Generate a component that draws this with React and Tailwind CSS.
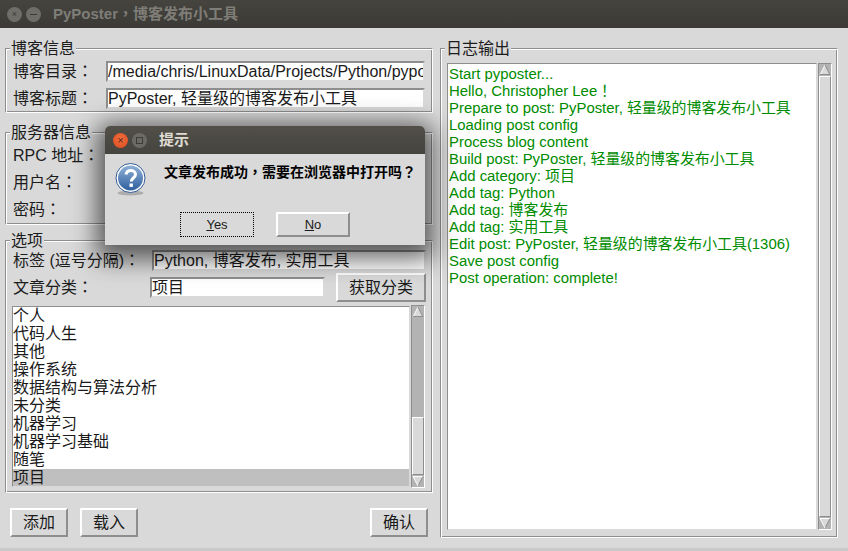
import React from "react";

const font = { fontFamily: '"Liberation Sans","Noto Sans CJK SC",sans-serif' };
const tcFont = { fontFamily: '"Noto Sans CJK TC",sans-serif' };

function T({ children }) {
  return String(children)
    .split(/([：，！？])/)
    .map((part, i) =>
      i % 2 ? (
        <span key={i} className="leading-[0]" style={tcFont}>{part}</span>
      ) : (
        part
      )
    );
}

function Frame({ title, className = "", children }) {
  return (
    <fieldset className={"min-w-0 border border-t-[#8e8e8e] border-l-[#8e8e8e] border-r-white border-b-white shadow-[inset_1px_1px_0_#fff,inset_-1px_-1px_0_#8e8e8e] " + className}>
      <legend className="ml-[4px] bg-[#d9d9d9] px-[1px] text-[16px] leading-[17px] text-[#1c1c1c]">{title}</legend>
      {children}
    </fieldset>
  );
}

function Entry({ value, className = "" }) {
  return (
    <div className={"h-[21px] overflow-hidden whitespace-nowrap border-2 border-t-[#8e8e8e] border-l-[#8e8e8e] border-r-[#d9d9d9] border-b-[#d9d9d9] bg-white text-[16px] leading-[17px] text-[#1a1a1a] " + className}>
      {value}
    </div>
  );
}

function Btn({ children, className = "" }) {
  return (
    <div className={"flex items-center justify-center border-2 border-t-white border-l-white border-r-[#8e8e8e] border-b-[#8e8e8e] bg-[#d9d9d9] text-[16px] text-[#1a1a1a] " + className}>
      {children}
    </div>
  );
}

function Arrow({ down }) {
  return (
    <svg width="12" height="12" viewBox="0 0 12 12" className="block shrink-0">
      <rect width="12" height="12" fill="#b3b3b3" />
      {down ? (
        <>
          <polygon points="1,1 11,1 6,11" fill="#d9d9d9" />
          <path d="M1 1.5H11" stroke="#fff" />
          <path d="M11 1.5L6 11" stroke="#8e8e8e" />
          <path d="M1 1.5L6 11" stroke="#fff" />
        </>
      ) : (
        <>
          <polygon points="6,1 11,11 1,11" fill="#d9d9d9" />
          <path d="M6 1L1 11" stroke="#fff" />
          <path d="M1 10.5H11" stroke="#8e8e8e" />
          <path d="M6 1L11 11" stroke="#8e8e8e" />
        </>
      )}
    </svg>
  );
}

function Scrollbar({ topGap, thumbH, className = "" }) {
  return (
    <div className={"flex w-[14px] shrink-0 flex-col border border-t-[#8e8e8e] border-l-[#8e8e8e] border-r-white border-b-white bg-[#b3b3b3] " + className}>
      <Arrow />
      <div className="min-h-0 flex-1">
        <div style={{ height: topGap }} />
        <div className="border border-t-white border-l-white border-r-[#8e8e8e] border-b-[#8e8e8e] bg-[#d9d9d9]" style={{ height: thumbH }} />
      </div>
      <Arrow down />
    </div>
  );
}

const cats = ["个人", "代码人生", "其他", "操作系统", "数据结构与算法分析", "未分类", "机器学习", "机器学习基础", "随笔"];

const logs = [
  "Start pyposter...",
  "Hello, Christopher Lee！",
  "Prepare to post: PyPoster, 轻量级的博客发布小工具",
  "Loading post config",
  "Process blog content",
  "Build post: PyPoster, 轻量级的博客发布小工具",
  "Add category: 项目",
  "Add tag: Python",
  "Add tag: 博客发布",
  "Add tag: 实用工具",
  "Edit post: PyPoster, 轻量级的博客发布小工具(1306)",
  "Save post config",
  "Post operation: complete!",
];

function WinBtn({ red, children }) {
  return (
    <div className={"flex size-[15px] items-center justify-center rounded-full " + (red ? "bg-[radial-gradient(circle_at_50%_40%,#f0703f,#d9481c)]" : "bg-[#6b6a65]")}>
      {children}
    </div>
  );
}

function Question() {
  return (
    <svg width="32" height="34" viewBox="0 0 32 34" className="block">
      <defs>
        <linearGradient id="qg" x1="0" y1="0" x2="0" y2="1">
          <stop offset="0" stopColor="#8fb0d6" />
          <stop offset="1" stopColor="#2f5f9e" />
        </linearGradient>
      </defs>
      <ellipse cx="15.5" cy="30" rx="13" ry="2.5" fill="#000" opacity="0.2" />
      <circle cx="15.5" cy="15" r="14.5" fill="#fff" stroke="#2f5a96" strokeWidth="1" />
      <circle cx="15.5" cy="15" r="12.5" fill="url(#qg)" />
      <path d="M11 11.5C11.5 8.5 14 7.5 16 7.5C19 7.5 20.5 9.5 20.5 11.5C20.5 15 16.2 15 16.2 18.5" fill="none" stroke="#fff" strokeWidth="3" />
      <rect x="14.5" y="20.5" width="3.4" height="3.4" fill="#fff" />
    </svg>
  );
}

function Row({ label, value }) {
  return (
    <div className="flex h-[21px] items-center pl-[7px] pr-[7px]">
      <span className="w-[93px] shrink-0 whitespace-nowrap text-[16px] leading-[21px] text-[#1c1c1c]"><T>{label}</T></span>
      <Entry value={value} className="flex-1" />
    </div>
  );
}

export default function App() {
  return (
    <div style={font} className="relative flex h-[551px] w-[848px] flex-col overflow-hidden bg-[#d9d9d9]">
      <div className="flex h-[28px] shrink-0 items-center bg-[linear-gradient(#45443f,#3b3a36)] pl-[7px]">
        <div className="flex gap-[4px]">
          <div className="flex size-[15px] items-center justify-center rounded-full bg-[#6e6d68] text-[9px] leading-none text-[#3c3b37]">×</div>
          <div className="flex size-[15px] items-center justify-center rounded-full bg-[#6e6d68]">
            <div className="h-[1px] w-[7px] bg-[#3c3b37]" />
          </div>
        </div>
        <span className="ml-[12px] text-[15px] font-bold text-[#7f7d77]"><T>PyPoster，博客发布小工具</T></span>
      </div>

      <div className="flex min-h-0 flex-1 gap-[7px] pl-[5px] pr-[10px] pt-[12px]">
        <div className="flex w-[428px] shrink-0 flex-col">
          <Frame title="博客信息" className="h-[73px]">
            <div className="mt-[4px] flex flex-col gap-[6px]">
              <Row label="博客目录：" value="/media/chris/LinuxData/Projects/Python/pyposter" />
              <Row label="博客标题：" value="PyPoster, 轻量级的博客发布小工具" />
            </div>
          </Frame>
          <Frame title="服务器信息" className="mt-[11px] h-[101px]">
            <div className="mt-[4px] flex flex-col gap-[6px]">
              <Row label="RPC 地址：" value="" />
              <Row label="用户名：" value="" />
              <Row label="密码：" value="" />
            </div>
          </Frame>
          <Frame title="选项" className="mt-[7px] h-[261px]">
            <div className="mt-[1px] flex h-[21px] items-center pl-[7px] pr-[6px]">
              <span className="w-[139px] shrink-0 whitespace-nowrap text-[16px] leading-[21px] text-[#1c1c1c]"><T>标签 (逗号分隔)：</T></span>
              <Entry value="Python, 博客发布, 实用工具" className="flex-1" />
            </div>
            <div className="mt-[2px] flex h-[29px] items-center pl-[7px] pr-[6px]">
              <span className="w-[137px] shrink-0 whitespace-nowrap text-[16px] leading-[21px] text-[#1c1c1c]"><T>文章分类：</T></span>
              <Entry value="项目" className="w-[175px]" />
              <Btn className="ml-[11px] h-[29px] flex-1">获取分类</Btn>
            </div>
            <div className="ml-[6px] mr-[7px] mt-[3px] flex h-[183px]">
              <div className="my-[1px] min-w-0 flex-1 overflow-hidden border border-t-[#8e8e8e] border-l-[#8e8e8e] border-r-[#d9d9d9] border-b-[#d9d9d9] bg-white text-[16px] leading-[18px] text-[#1a1a1a]">
                {cats.map((c) => (
                  <div key={c} className="h-[18px] whitespace-nowrap">{c}</div>
                ))}
                <div className="h-[18px] bg-[#bfbfbf]">项目</div>
              </div>
              <Scrollbar topGap={99} thumbH={58} className="ml-[1px]" />
            </div>
          </Frame>
          <div className="flex justify-between px-[5px] pt-[15px]">
            <div className="flex gap-[12px]">
              <Btn className="h-[29px] w-[58px]">添加</Btn>
              <Btn className="h-[29px] w-[58px]">载入</Btn>
            </div>
            <Btn className="h-[29px] w-[58px]">确认</Btn>
          </div>
        </div>

        <Frame title="日志输出" className="mb-[10px] flex min-w-0 flex-1 flex-col">
          <div className="ml-[6px] mr-[5px] mt-[6px] flex h-[467px]">
            <div className="min-w-0 flex-1 overflow-hidden border border-t-[#8e8e8e] border-l-[#8e8e8e] border-r-[#d9d9d9] border-b-[#d9d9d9] bg-white pl-[1px] pt-[2px] text-[14.9px] leading-[17px] text-[#008c00]">
              {logs.map((l) => (
                <div key={l} className="h-[17px] whitespace-nowrap"><T>{l}</T></div>
              ))}
            </div>
            <Scrollbar topGap={0} thumbH={441} className="ml-[1px]" />
          </div>
        </Frame>
      </div>
      <div className="h-[3px] shrink-0 bg-[#c9c9c9]" />

      <div className="absolute left-[105px] top-[126px] flex h-[119px] w-[320px] flex-col overflow-hidden rounded-t-[5px] bg-[#d9d9d9] shadow-[0_6px_24px_8px_rgba(0,0,0,0.6)]">
        <div className="flex h-[28px] shrink-0 items-center bg-[linear-gradient(#514f48,#45443e)] pl-[8px]">
          <div className="flex gap-[4px]">
            <WinBtn red>
              <span className="text-[11px] leading-none text-[#5a2312]">×</span>
            </WinBtn>
            <WinBtn>
              <div className="size-[7px] border border-[#3c3b37]" />
            </WinBtn>
          </div>
          <span className="ml-[12px] text-[15px] font-bold text-[#dfdbd2]">提示</span>
        </div>
        <div className="flex h-[41px] pl-[10px] pt-[8px]">
          <div className="mt-[1px] shrink-0"><Question /></div>
          <span className="ml-[17px] whitespace-nowrap text-[14px] font-bold leading-[20px] text-black"><T>文章发布成功，需要在浏览器中打开吗？</T></span>
        </div>
        <div className="mt-[17px] flex gap-[22px] pl-[75px]">
          <div className="flex h-[25px] w-[74px] items-center justify-center border border-dotted border-black text-[13px] text-[#1a1a1a]">
            <span><span className="underline">Y</span>es</span>
          </div>
          <Btn className="h-[25px] w-[74px] !text-[13px]">
            <span><span className="underline">N</span>o</span>
          </Btn>
        </div>
      </div>
    </div>
  );
}
